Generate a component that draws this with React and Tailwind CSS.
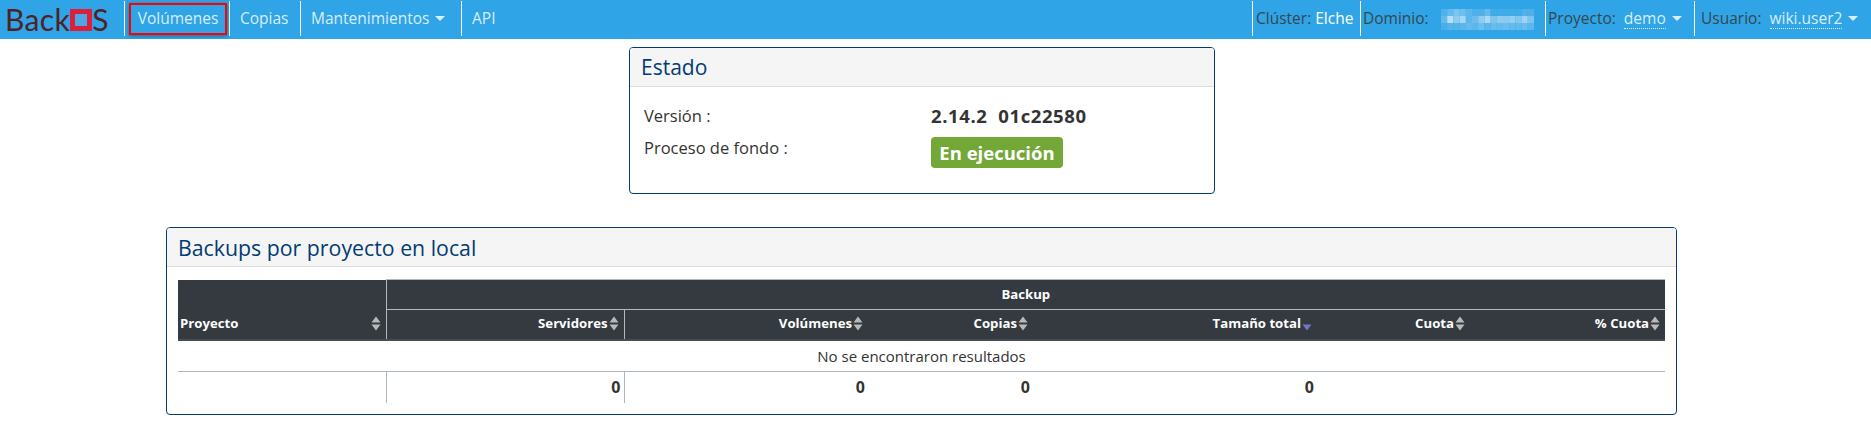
import React from 'react'

const SortIcon = ({ active }) => (
  <svg width="10" height="15" viewBox="0 0 10 15" className="inline-block align-[-3px] ml-[1px]">
    {!active && <path d="M5 0.5 L9.5 6.5 H0.5 Z" fill="#b9b9b9" />}
    <path d="M0.5 8.5 H9.5 L5 14.5 Z" fill={active ? '#7474c8' : '#b9b9b9'} />
  </svg>
)

const Caret = () => (
  <span className="inline-block ml-[6px] align-[3px] w-0 h-0 border-x-[5px] border-x-transparent border-t-[5px] border-t-[#d8eefa]" />
)

const NavItem = ({ children, className = '' }) => (
  <div className={`flex items-center h-[35px] mt-[1px] border-l border-white ${className}`}>{children}</div>
)

// blurred domain name, one cell per mosaic block
const MOSAIC = [
  ['#4fb1ea', '#63baec', '#7cc5ef', '#6fbfee', '#5cb6eb', '#4fb0e9', '#4fb0e9', '#64baeb', '#3fabe8', '#3fabe8', '#3fabe8', '#3fabe8', '#3fabe8', '#52b1e9', '#4eafe9'],
  ['#62baec', '#b9e0f7', '#8ccdf1', '#a3d7f4', '#5cb6eb', '#6cbdee', '#8ccdf1', '#a9daf5', '#7cc5ef', '#8ccdf1', '#88caf1', '#93cff2', '#83c8f0', '#9ad3f3', '#7cc5ef'],
  ['#4cade8', '#55b3ea', '#55b3ea', '#5cb6eb', '#64baec', '#5cb6eb', '#6fbfee', '#5cb6eb', '#6abcec', '#64baec', '#6abcec', '#64baec', '#64baec', '#6abcec', '#5cb6eb'],
]

const SORT_COLS = [
  { label: 'Servidores' },
  { label: 'Volúmenes' },
  { label: 'Copias' },
  { label: 'Tamaño total', active: true },
  { label: 'Cuota' },
  { label: '% Cuota' },
]

const App = () => {
  return (
    <div className="font-['Open_Sans',sans-serif] text-[#333] bg-white min-h-[434px]">
      {/* navbar */}
      <nav className="h-[39px] bg-[#2fa4e7] flex items-start justify-between text-[15.5px] text-[#d8eefa]">
        <div className="flex items-start">
          <div className="w-[124px] h-[39px] pl-[5px] flex items-center font-['Lato',sans-serif] text-[30px] text-[#4f2226] tracking-[0.4px]">
            Back
            <span className="w-[22px] h-[22px] border-[5px] border-[#dc1f3c] bg-[#4fa6e2] inline-block" />
            S
          </div>
          <NavItem className="pl-[4px] w-[105px]">
            <div className="w-[98px] h-[32px] border-2 border-[#ff0000] flex items-center justify-center shadow-[0_1px_4px_rgba(0,0,0,0.35)]">
              Volúmenes
            </div>
          </NavItem>
          <NavItem className="pl-[10px] w-[71px]">Copias</NavItem>
          <NavItem className="pl-[10px] w-[161px]">
            Mantenimientos
            <Caret />
          </NavItem>
          <NavItem className="pl-[10px]">API</NavItem>
        </div>
        <div className="flex items-start text-[#37474f]">
          <NavItem className="pl-[3px] w-[108px] whitespace-nowrap">
            Clúster:&nbsp;<span className="text-white">Elche</span>
          </NavItem>
          <NavItem className="pl-[2px] w-[185px] whitespace-nowrap">
            Dominio:
            <svg width="93" height="21" viewBox="0 0 90 21" preserveAspectRatio="none" className="ml-[12px] mt-[2px]">
              {MOSAIC.map((row, y) =>
                row.map((fill, x) => <rect key={x} x={x * 6} y={y * 7} width="6" height="7" fill={fill} />)
              )}
            </svg>
          </NavItem>
          <NavItem className="pl-[2px] w-[149px] whitespace-nowrap">
            Proyecto:&nbsp;&nbsp;
            <span className="text-[#d8eefa] border-b border-dotted border-[#d8eefa] leading-[19px]">demo</span>
            <Caret />
          </NavItem>
          <NavItem className="pl-[6px] w-[177px] whitespace-nowrap">
            Usuario:&nbsp;&nbsp;
            <span className="text-[#d8eefa] border-b border-dotted border-[#d8eefa] leading-[19px]">wiki.user2</span>
            <Caret />
          </NavItem>
        </div>
      </nav>

      {/* estado */}
      <div className="pt-[8px] pl-[629px]">
        <section className="w-[586px] h-[147px] border border-[#033c73] rounded-[4px] overflow-hidden">
          <h3 className="h-[39px] pt-[2px] bg-[#f5f5f5] border-b border-[#ddd] px-[11px] flex items-center text-[21px] text-[#033c73] font-normal">
            Estado
          </h3>
          <div className="px-[14px] pt-[17px] text-[16.5px]">
            <div className="flex h-[32px]">
              <div className="w-[287px]">Versión :</div>
              <b className="font-bold text-[18.5px] tracking-[0.6px] leading-[24px]">2.14.2&nbsp; 01c22580</b>
            </div>
            <div className="flex">
              <div className="w-[287px]">Proceso de fondo :</div>
              <span className="mt-[1px] h-[31px] w-[132px] flex items-center justify-center rounded-[4px] bg-[#73a839] text-white text-[18.5px] font-bold">
                En ejecución
              </span>
            </div>
          </div>
        </section>
      </div>

      {/* backups */}
      <div className="mt-[33px] ml-[166px] mr-[194px] pb-[19px]">
        <section className="h-[188px] border border-[#033c73] rounded-[4px] overflow-hidden">
          <h3 className="h-[39px] pt-[2px] bg-[#f5f5f5] border-b border-[#ddd] px-[11px] flex items-center text-[21.3px] text-[#033c73] font-normal">
            Backups por proyecto en local
          </h3>
          <div className="px-[11px] pt-[12px]">
            <table className="w-[1487px] table-fixed border-collapse text-[13.2px]">
              <colgroup>
                <col className="w-[208px]" />
                <col className="w-[238px]" />
                <col className="w-[244px]" />
                <col className="w-[165px]" />
                <col className="w-[284px]" />
                <col className="w-[153px]" />
                <col className="w-[195px]" />
              </colgroup>
              <thead className="bg-[#343a40] text-white font-bold">
                <tr className="h-[30px]">
                  <th rowSpan="2" className="border-b-2 border-b-[#454d55] align-bottom text-left pl-[2px] pb-[5px] pr-[5px]">
                    <span className="flex items-center justify-between">
                      Proyecto
                      <SortIcon />
                    </span>
                  </th>
                  <th colSpan="6" className="border-l border-t border-[#b4b8bc] text-center">Backup</th>
                </tr>
                <tr className="h-[30px]">
                  {SORT_COLS.map((col) => (
                    <th
                      key={col.label}
                      className={`border-t border-t-[#b4b8bc] border-b-2 border-b-[#454d55] text-right pr-[5px] whitespace-nowrap ${col.label === 'Servidores' ? 'border-l border-l-[#b4b8bc] border-r border-r-[#b4b8bc]' : ''}`}
                    >
                      {col.label}
                      <SortIcon active={col.active} />
                    </th>
                  ))}
                </tr>
              </thead>
              <tbody>
                <tr className="h-[32px]">
                  <td colSpan="7" className="text-center text-[15px] border-b border-[#adb5bd]">
                    No se encontraron resultados
                  </td>
                </tr>
              </tbody>
              <tfoot>
                <tr className="h-[31px] text-[16px] font-bold text-right">
                  <td />
                  <td className="border-x border-[#adb5bd] pr-[3px]">0</td>
                  <td className="pr-[3px]">0</td>
                  <td className="pr-[3px]">0</td>
                  <td className="pr-[3px]">0</td>
                  <td />
                  <td />
                </tr>
              </tfoot>
            </table>
          </div>
        </section>
      </div>
    </div>
  )
}

export default App
